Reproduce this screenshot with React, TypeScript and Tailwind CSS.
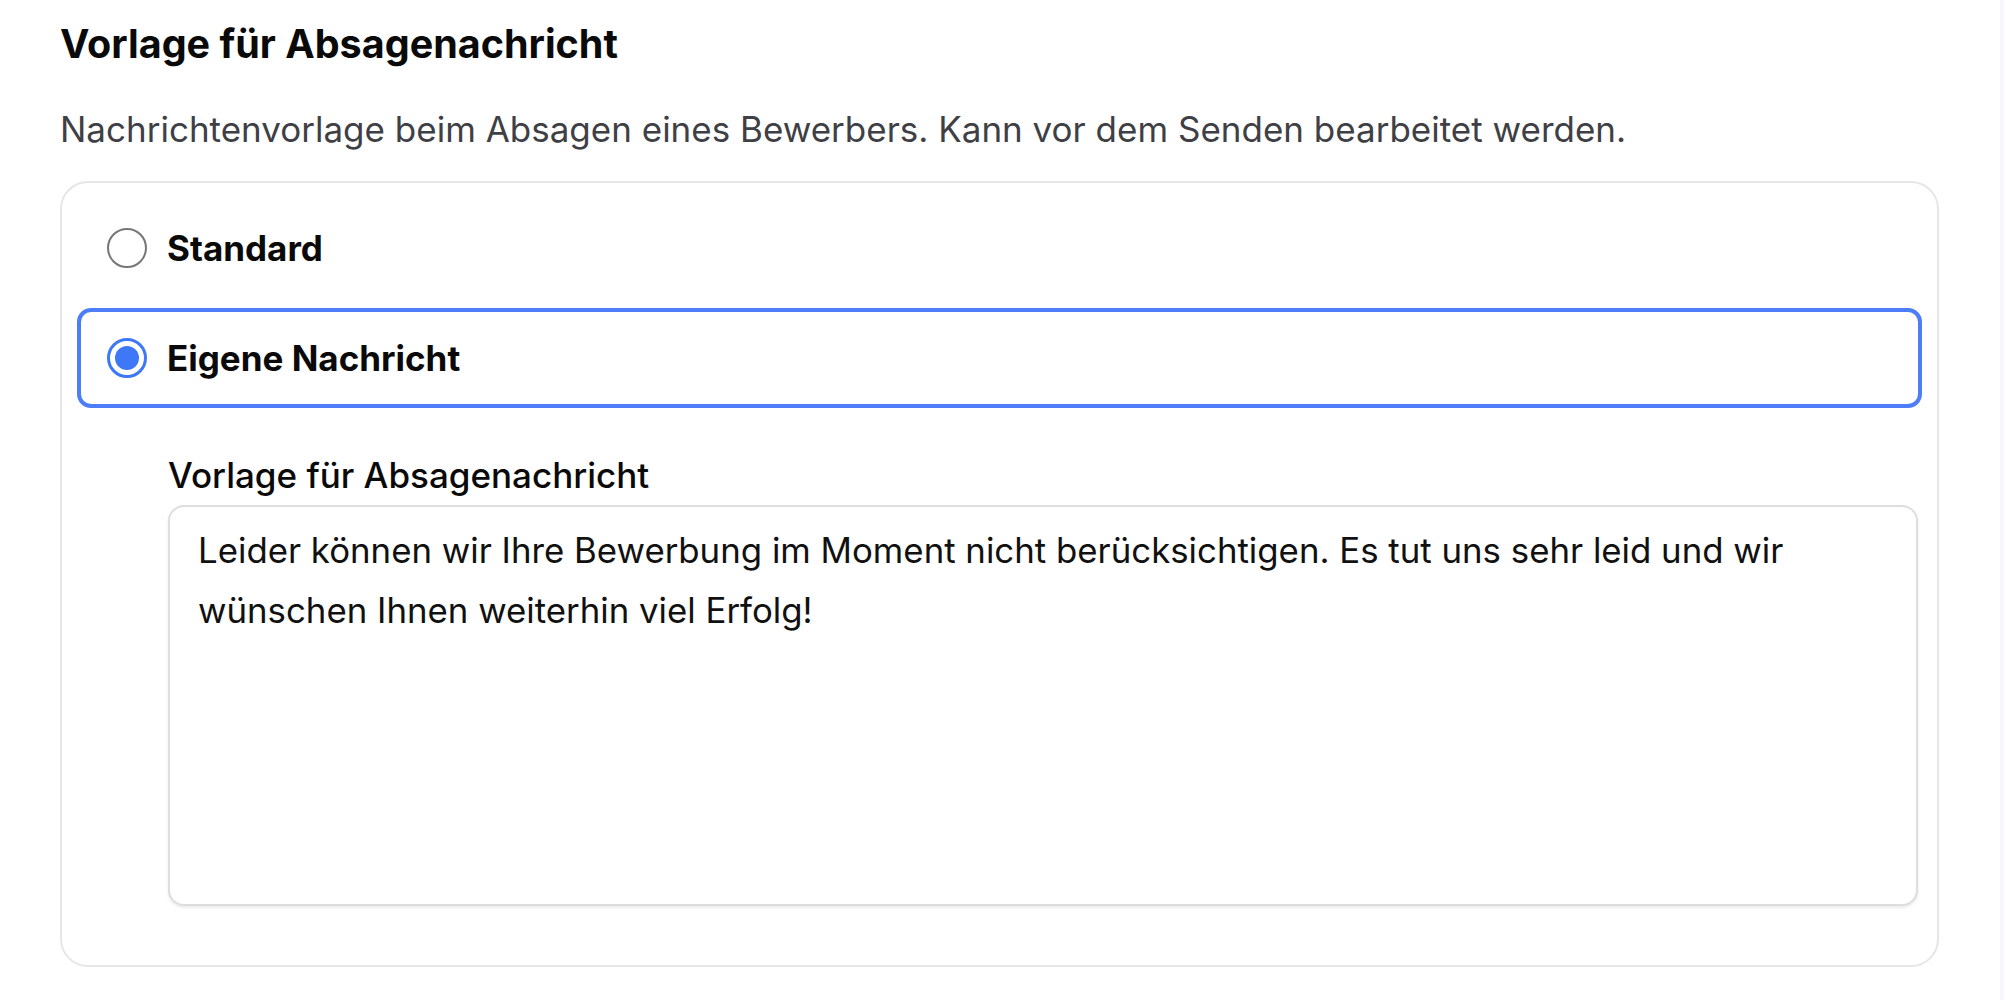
const options = [
  { id: 'standard', label: 'Standard', active: false },
  { id: 'custom', label: 'Eigene Nachricht', active: true },
];

const RadioDot = ({ active }: { active: boolean }) => {
  if (!active) {
    return <div className="h-[40px] w-[40px] shrink-0 rounded-full border-[2px] border-[#767676] bg-white"></div>;
  }
  return (
    <div className="flex h-[40px] w-[40px] shrink-0 items-center justify-center rounded-full border-[3px] border-[#3f78f6] bg-white">
      <div className="h-[24px] w-[24px] rounded-full bg-[#3f78f6]"></div>
    </div>
  );
};

const App = () => {
  return (
    <div className="flex min-h-[1000px] w-full bg-white font-['Inter',sans-serif]">
      <div className="flex-1 pl-[60px] pr-[61px] pt-[22px]">
        <div className="text-[39.5px] font-bold leading-[45px] text-[#0a0a0a]">
          Vorlage für Absagenachricht
        </div>
        <div className="mt-[35px] text-[35px] leading-[54px] text-[#3f3f46]">
          Nachrichtenvorlage beim Absagen eines Bewerbers. Kann vor dem Senden bearbeitet werden.
        </div>
        <div className="mt-[25px] rounded-[28px] border-[2px] border-[#e6e6e6] px-[15px] pb-[59px] pt-[15px]">
          <div className="flex flex-col gap-[10px]">
            {options.map((item) => {
              return (
                <div
                  key={item.id}
                  className={`flex h-[100px] items-center gap-[20px] rounded-[14px] border-[4px] px-[26px] ${item.active ? 'border-[#4d7ef7]' : 'border-transparent'}`}
                >
                  <RadioDot active={item.active} />
                  <span className="text-[35px] font-bold text-[#0a0a0a]">{item.label}</span>
                </div>
              );
            })}
          </div>
          <div className="ml-[91px] mr-[4px] mt-[47px]">
            <div className="text-[35px] font-medium leading-[40px] text-[#0a0a0a]">
              Vorlage für Absagenachricht
            </div>
            <div className="mt-[10px] h-[401px] rounded-[16px] border-[2px] border-[#dedede] bg-white px-[28px] pt-[13px] text-[34.8px] leading-[60px] text-[#111111] shadow-[0_2px_3px_rgba(0,0,0,0.08)]">
              Leider können wir Ihre Bewerbung im Moment nicht berücksichtigen. Es tut uns sehr leid und wir wünschen Ihnen weiterhin viel Erfolg!
            </div>
          </div>
        </div>
      </div>
      <div className="w-[4px] shrink-0 bg-[#f7f7fb]"></div>
    </div>
  );
};

export default App;
